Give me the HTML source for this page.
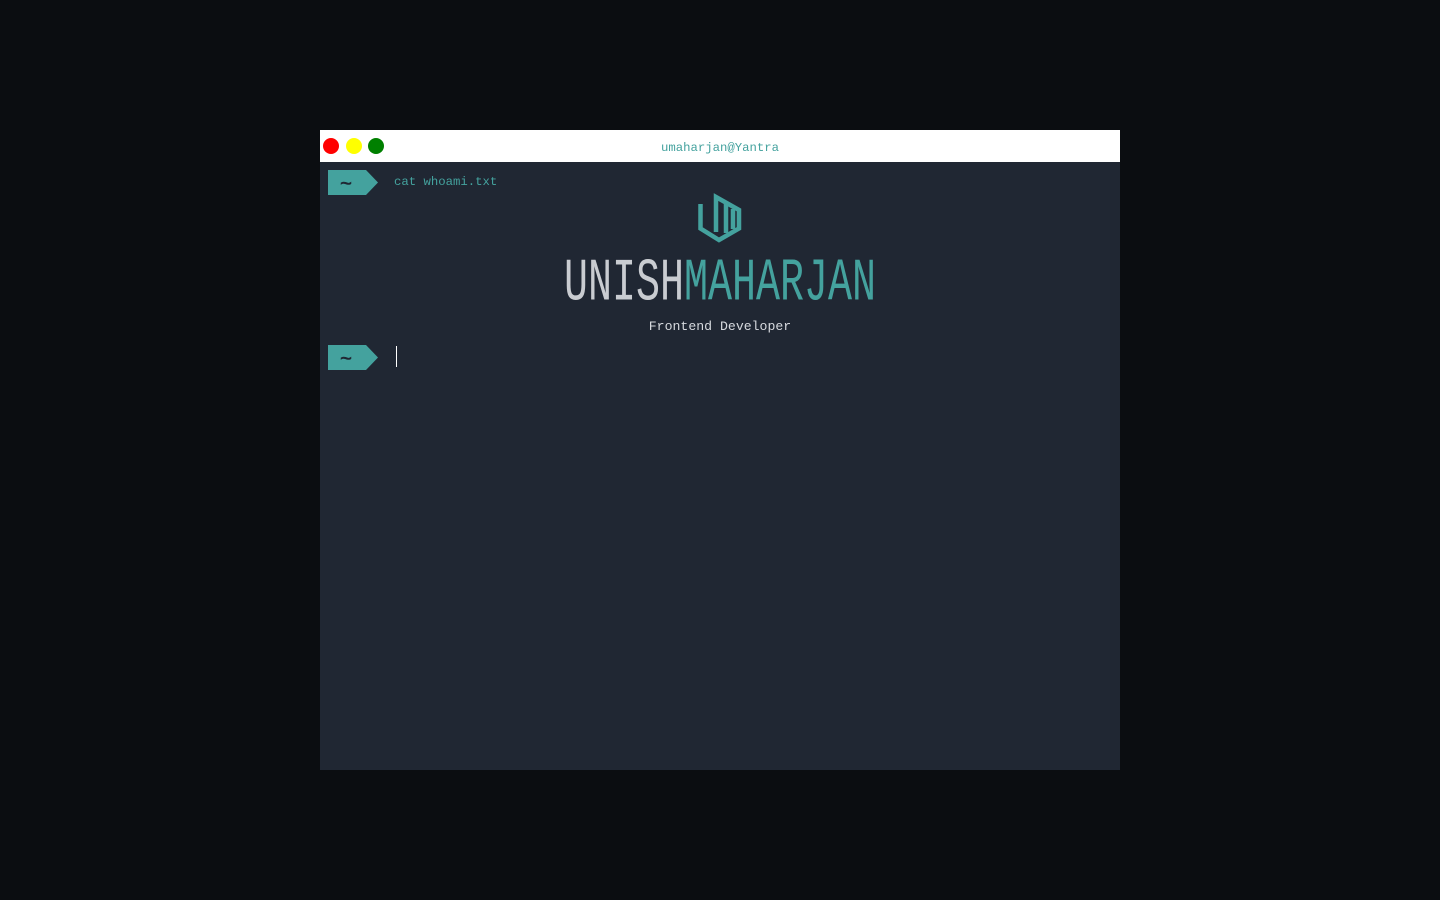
<!DOCTYPE html>
<html><head><meta charset="utf-8"><style>
html,body{margin:0;padding:0;background:#0b0d11;width:1440px;height:900px;overflow:hidden;font-family:"Liberation Mono",monospace}
.win{position:absolute;left:320px;top:130px;width:800px;height:640px;background:#202733}
.bar{position:absolute;left:0;top:0;width:800px;height:32px;background:#fff}
.dot{position:absolute;top:8px;width:16px;height:16px;border-radius:50%}
.title{position:absolute;left:0;right:0;top:11px;text-align:center;color:#44a29e;font-size:12.3px;letter-spacing:0}
.tag{position:absolute;left:8px;width:50px;height:25px}
.cmd{position:absolute;left:74px;top:45px;color:#44a29e;font-size:12.3px}
.name{position:absolute;left:0;width:800px;top:126px;text-align:center;font-size:40px;line-height:40px;transform:scaleY(1.5);transform-origin:center top;letter-spacing:0}
.sub{position:absolute;left:0;width:800px;top:189px;text-align:center;color:#d6d9de;font-size:13.2px}
.cursor{position:absolute;left:76px;top:216px;width:1px;height:21px;background:#fff}
</style></head><body>
<div class="win">
<div class="bar">
<div class="dot" style="left:3px;background:#ff0000"></div>
<div class="dot" style="left:26px;background:#ffff00"></div>
<div class="dot" style="left:48px;background:#008000"></div>
<div class="title">umaharjan@Yantra</div>
</div>
<svg class="tag" style="top:40px" viewBox="0 0 50 25"><polygon points="0,0 38,0 50,12.5 38,25 0,25" fill="#44a29e"/><text x="12" y="20" font-family="Liberation Mono" font-size="20" fill="#202733" stroke="#202733" stroke-width="0.6">~</text></svg>
<div class="cmd">cat whoami.txt</div>
<svg style="position:absolute;left:370px;top:60px" width="60" height="58" viewBox="0 0 60 58">
<g fill="none" stroke="#44a29e" stroke-width="4.5" stroke-linejoin="miter">
<polyline points="10.5,14 10.5,38.5 29,50 49,38.5 49,20 26,7 26,42"/>
<line x1="36" y1="14" x2="36" y2="43"/>
<line x1="43" y1="19" x2="43" y2="39"/>
</g></svg>
<div class="name"><span style="color:#c9ccd1">UNISH</span><span style="color:#44a29e">MAHARJAN</span></div>
<div class="sub">Frontend Developer</div>
<svg class="tag" style="top:215px" viewBox="0 0 50 25"><polygon points="0,0 38,0 50,12.5 38,25 0,25" fill="#44a29e"/><text x="12" y="20" font-family="Liberation Mono" font-size="20" fill="#202733" stroke="#202733" stroke-width="0.6">~</text></svg>
<div class="cursor"></div>
</div>
</body></html>
